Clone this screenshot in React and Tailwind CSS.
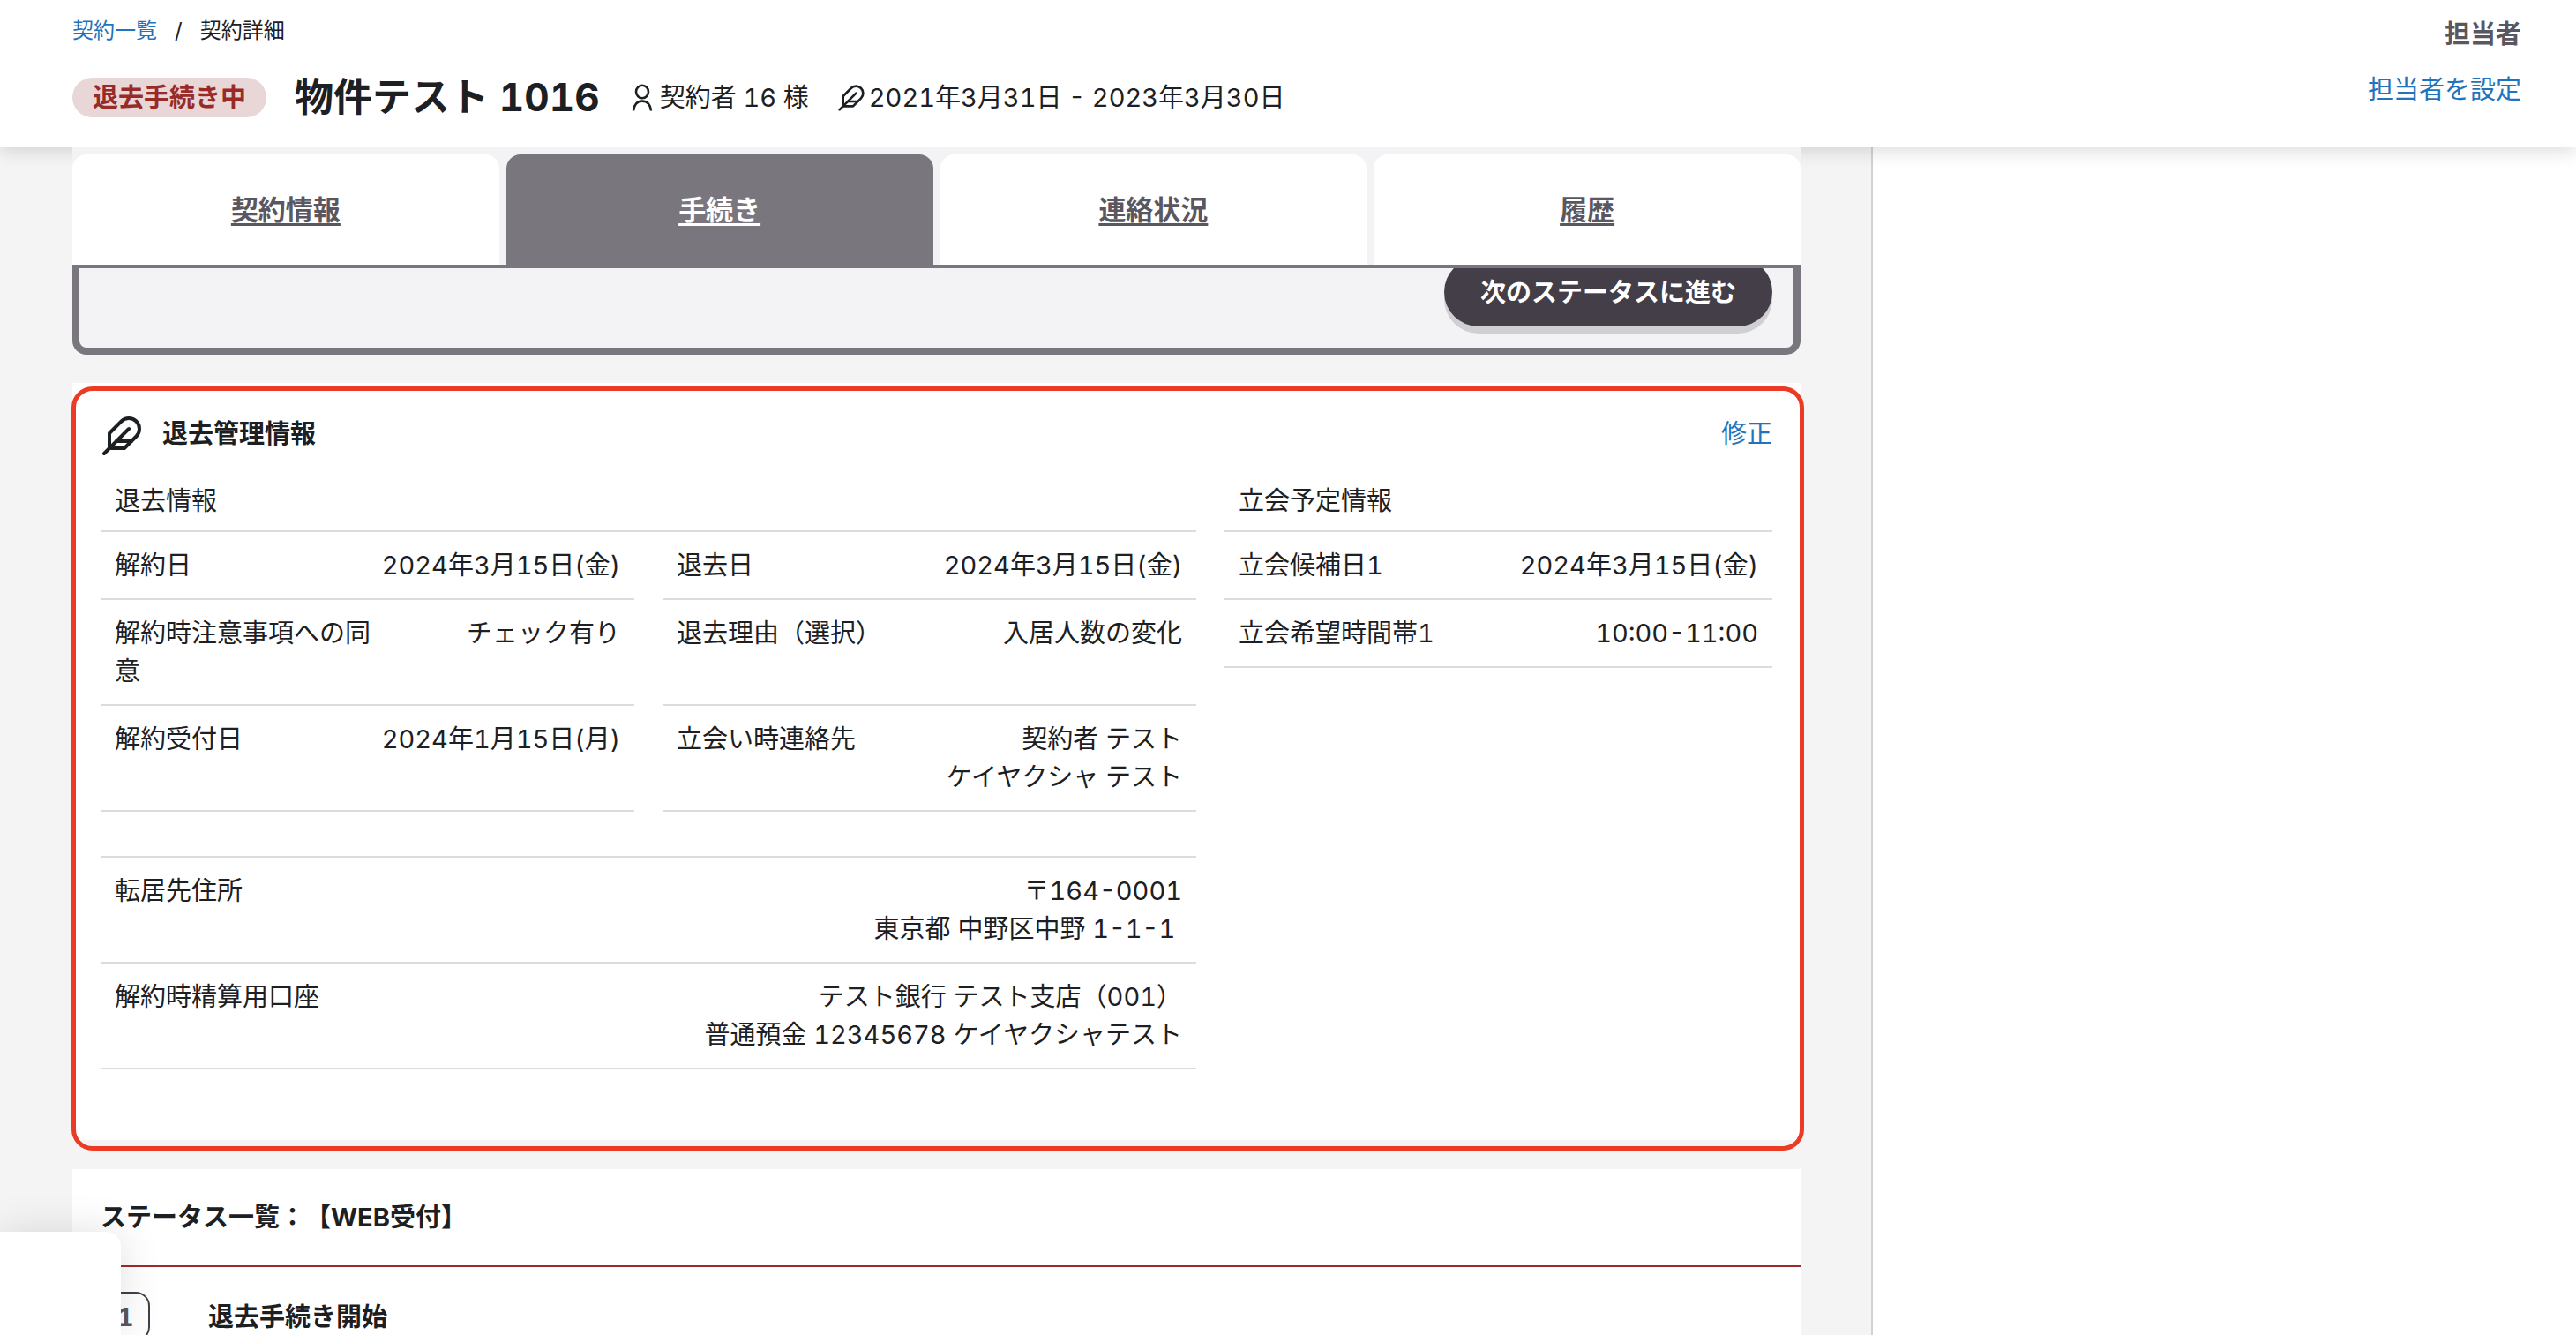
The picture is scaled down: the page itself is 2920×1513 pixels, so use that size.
import { FiFeather } from "react-icons/fi";

const tabs = [
  { label: "契約情報", href: "#contract", active: false },
  { label: "手続き", href: "#procedure", active: true },
  { label: "連絡状況", href: "#contact", active: false },
  { label: "履歴", href: "#history", active: false },
];

const moveOut = [
  { label: "解約日", values: ["2024年3月15日(金)"] },
  { label: "退去日", values: ["2024年3月15日(金)"] },
  { label: "解約時注意事項への同意", values: ["チェック有り"] },
  { label: "退去理由（選択）", values: ["入居人数の変化"] },
  { label: "解約受付日", values: ["2024年1月15日(月)"] },
  { label: "立会い時連絡先", values: ["契約者 テスト", "ケイヤクシャ テスト"] },
];

const moveOutWide = [
  { label: "転居先住所", values: ["〒164-0001", "東京都 中野区中野 1-1-1\u00a0"] },
  { label: "解約時精算用口座", values: ["テスト銀行 テスト支店（001）", "普通預金 12345678 ケイヤクシャテスト"] },
];

const inspection = [
  { label: "立会候補日1", values: ["2024年3月15日(金)"] },
  { label: "立会希望時間帯1", values: ["10:00-11:00"] },
];

const UserIcon = () => (
  <svg width="24" height="32" viewBox="0 0 24 32" fill="none" stroke="currentColor" strokeWidth="2.6" aria-hidden="true">
    <ellipse cx="12" cy="9" rx="7" ry="7.2" />
    <path d="M2 30.5C2.6 23.6 6.4 19.6 12 19.6s9.4 4 10 10.9" />
  </svg>
);

const Row = ({ label, values }) => (
  <div className="flex border-b-2 border-[#dcdcdc] p-4">
    <dt className="w-[52%] shrink-0">{label}</dt>
    <dd className="flex-1 whitespace-nowrap text-right">
      {values.map((v) => (
        <p key={v}>{v}</p>
      ))}
    </dd>
  </div>
);

const Header = () => (
  <header className="relative z-10 flex h-[167px] shrink-0 justify-between bg-white pl-[82px] pr-[62px] shadow-[0_4px_20px_rgba(0,0,0,0.14)]">
    <div className="pt-[17px]">
      <nav className="flex gap-5 text-[24px] leading-9">
        <a href="#list" className="text-[#1f74bd]">契約一覧</a>
        <span>/</span>
        <span>契約詳細</span>
      </nav>
      <div className="mt-[35px] flex items-center">
        <span className="rounded-full bg-[#e9d6d6] px-[23px] py-px font-bold text-[#982b28]">退去手続き中</span>
        <h1 className="ml-8 text-[44px] font-bold">物件テスト 1016</h1>
        <p className="ml-9 flex items-center gap-2">
          <UserIcon />
          契約者 16 様
        </p>
        <p className="ml-8 flex items-center gap-1">
          <FiFeather className="size-8" />
          2021年3月31日 - 2023年3月30日
        </p>
      </div>
    </div>
    <div className="flex flex-col items-end gap-5 pt-[17px]">
      <p className="font-bold text-[#5a5760]">担当者</p>
      <a href="#assign" className="text-[#1f74bd]">担当者を設定</a>
    </div>
  </header>
);

const Tabs = () => (
  <nav className="relative z-20 flex gap-2 border-b-4 border-[#7a767d] bg-[#f3f3f6] pt-2">
    {tabs.map((tab) => (
      <a
        key={tab.label}
        href={tab.href}
        className={`flex h-[125px] flex-1 items-center justify-center rounded-t-2xl text-[31px] font-bold underline underline-offset-4 ${
          tab.active ? "bg-[#7a767d] text-white" : "bg-white text-[#5a5760]"
        }`}
      >
        {tab.label}
      </a>
    ))}
  </nav>
);

const App = () => {
  return (
    <div className="flex h-screen flex-col overflow-hidden bg-white font-['Inter','Noto_Sans_CJK_JP',sans-serif] text-[29px] leading-[43px] text-[#1c2023] tabular-nums [text-spacing-trim:space-all]" lang="ja">
      <Header />
      <div className="flex min-h-0 flex-1">
        <main className="min-w-0 flex-1 border-r-2 border-[#d2d2d2] bg-[#f4f4f4] pl-[82px] pr-20">
          <Tabs />
          <div className="flex h-[98px] items-end justify-end overflow-hidden rounded-b-2xl border-8 border-t-0 border-[#7a767d] bg-[#f3f3f6] px-6 pb-6">
            <button className="h-[78px] shrink-0 rounded-full bg-[#433e48] px-[41px] font-bold text-white shadow-[0_8px_0_#d0d0d2]">
              次のステータスに進む
            </button>
          </div>

          {/* move-out information */}
          <section className="relative mt-8 bg-white px-8 pb-20 pt-9">
            <div className="pointer-events-none absolute -bottom-3 -left-px -right-1 top-1 rounded-3xl border-[5px] border-[#ec3b24]" />
            <div className="flex h-12 items-start gap-[22px]">
              <FiFeather className="size-12" />
              <h2 className="font-bold">退去管理情報</h2>
              <a href="#edit" className="ml-auto text-[#1f74bd]">修正</a>
            </div>
            <div className="mt-7 flex items-start gap-8">
              <div className="flex-[2]">
                <h3 className="border-b-2 border-[#dcdcdc] px-4 pb-3">退去情報</h3>
                <dl className="grid grid-cols-2 gap-x-8">
                  {moveOut.map((row) => (
                    <Row key={row.label} {...row} />
                  ))}
                </dl>
                <dl className="mt-[50px] border-t-2 border-[#dcdcdc]">
                  {moveOutWide.map((row) => (
                    <Row key={row.label} {...row} />
                  ))}
                </dl>
              </div>
              <div className="flex-1">
                <h3 className="border-b-2 border-[#dcdcdc] px-4 pb-3">立会予定情報</h3>
                <dl>
                  {inspection.map((row) => (
                    <Row key={row.label} {...row} />
                  ))}
                </dl>
              </div>
            </div>
          </section>

          {/* status list */}
          <section className="mt-[33px] bg-white">
            <h2 className="border-b-2 border-[#9b2c2c] px-8 py-[33px] font-bold">ステータス一覧：【WEB受付】</h2>
            <ol>
              <li className="flex items-center px-8 py-7">
                <span className="flex size-14 items-center justify-center rounded-2xl border-2 border-[#433e48] font-bold text-[#5a5760]">1</span>
                <span className="ml-[66px] font-bold">退去手続き開始</span>
              </li>
            </ol>
          </section>
        </main>
        <aside className="w-[797px] shrink-0 bg-white" />
      </div>
      <div className="fixed bottom-0 left-0 z-30 h-[117px] w-[137px] rounded-tr-2xl bg-white shadow-[0_0_48px_rgba(0,0,0,0.12)]" />
    </div>
  );
};

export default App;
